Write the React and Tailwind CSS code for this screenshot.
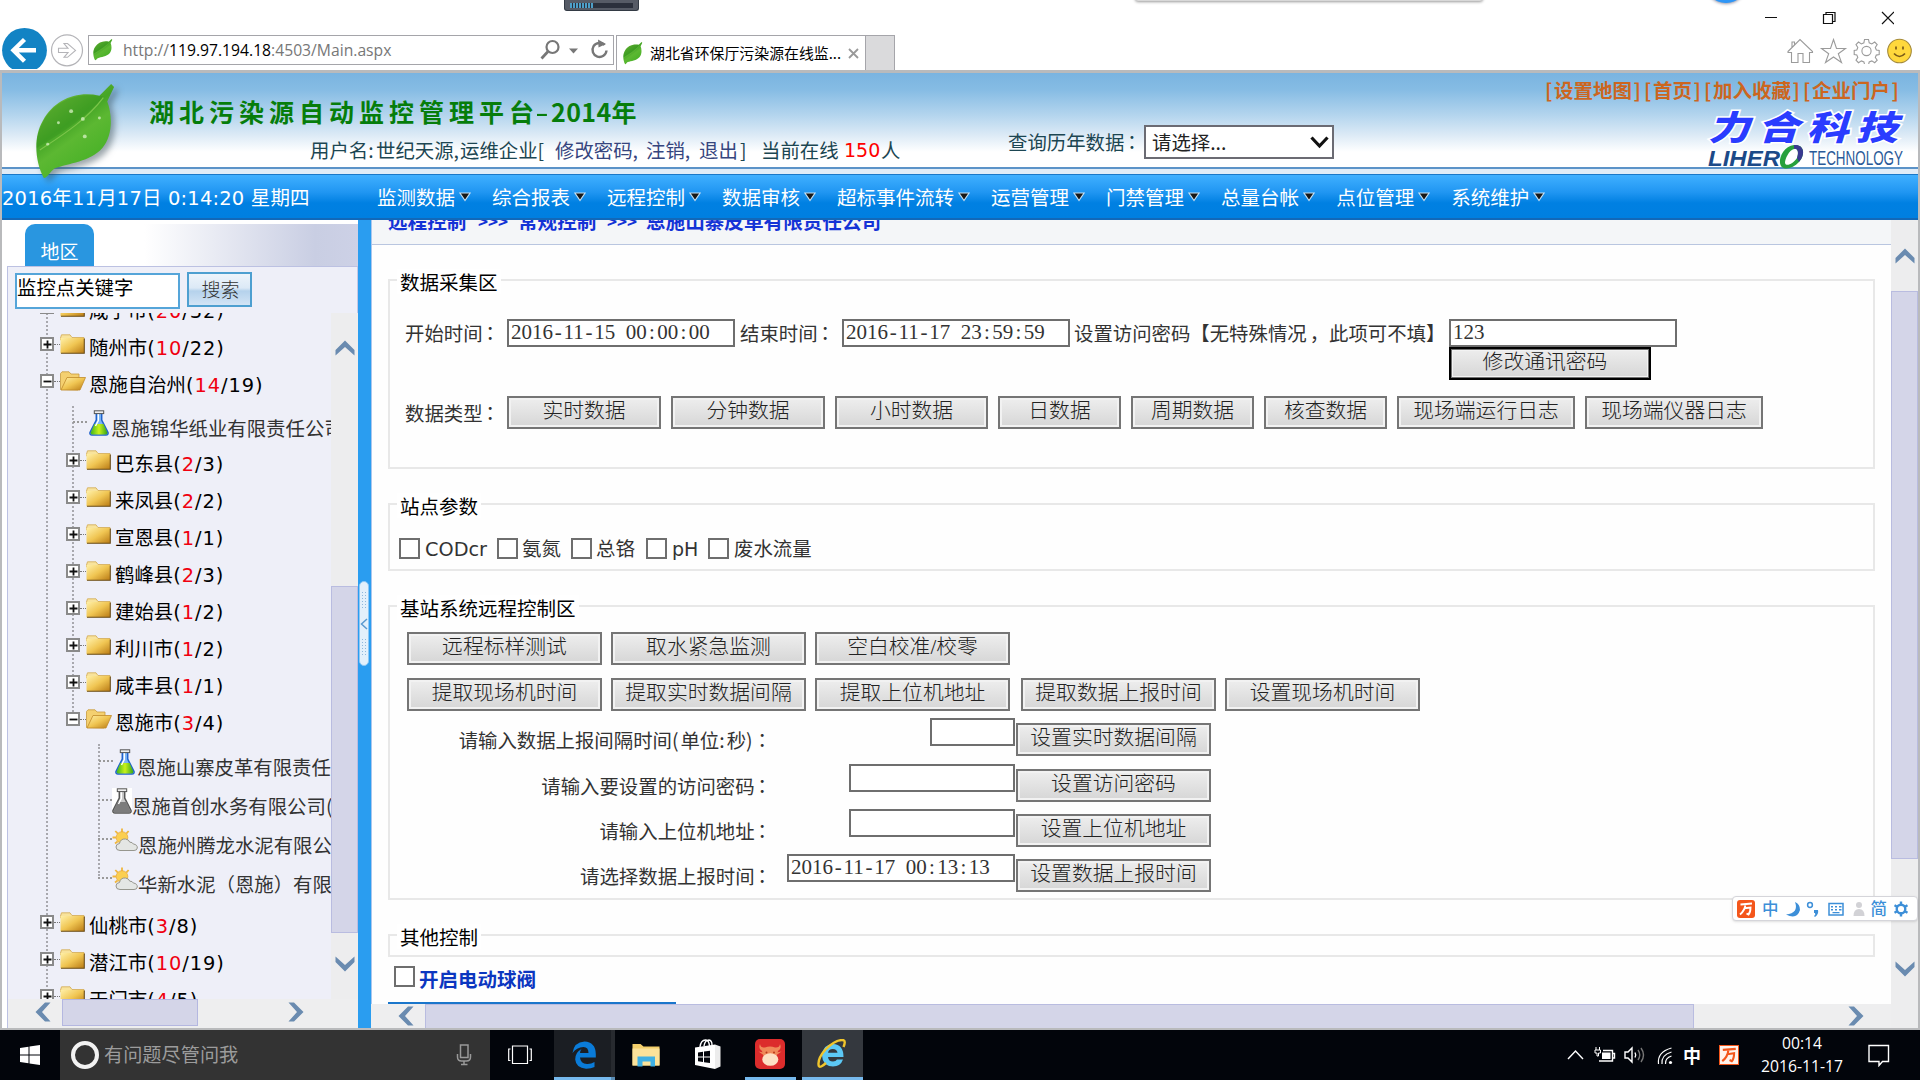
import React from "react";

const SANS = "font-['DejaVu_Sans','Noto_Sans_CJK_SC',sans-serif]";
const CJK = "font-['Noto_Sans_CJK_SC',sans-serif]";
const SERIF = "font-['Liberation_Serif','Noto_Sans_CJK_SC',serif]";

function Leaf({ className, drops = false }) {
  return (
    <svg viewBox="0 0 84 100" className={className} preserveAspectRatio="none">
      <defs>
        <linearGradient id="leafFill" x1="0.2" y1="0" x2="0.8" y2="1">
          <stop offset="0" stopColor="#7cc13e" />
          <stop offset="0.4" stopColor="#45a526" />
          <stop offset="0.55" stopColor="#5cb832" />
          <stop offset="1" stopColor="#3fae22" />
        </linearGradient>
      </defs>
      <path d="M9 97 C0 80 -2 55 8 38 C20 16 42 7 66 12 L78 0 L81 3 L74 18 C80 34 79 54 69 66 C57 80 34 82 20 87 C16 90 13 96 9 97Z" fill="url(#leafFill)" />
      <path d="M2 66 C20 55 52 36 70 13 C52 9 26 12 11 34 C4 46 1 56 2 66Z" fill="#2f8a1c" opacity="0.3" />
      <path d="M5 68 C26 54 52 38 70 14" stroke="#7cc54a" strokeWidth="1.2" fill="none" />
      {drops && (
        <g fill="#d8f3c4" opacity="0.75">
          <circle cx="37" cy="28" r="2" /><circle cx="49" cy="36" r="2" /><circle cx="66" cy="35" r="1.5" />
          <circle cx="51" cy="54" r="2" /><circle cx="24" cy="40" r="1.5" /><circle cx="13" cy="62" r="1.5" />
        </g>
      )}
    </svg>
  );
}

function Chevron({ dir }) {
  const rot = { up: "rotate-0", right: "rotate-90", down: "rotate-180", left: "-rotate-90" }[dir];
  return (
    <svg viewBox="0 0 20 16" className={`h-4 w-5 shrink-0 ${rot}`}>
      <path d="M0.5 10 L10 0.5 L19.5 10 V15.5 L10 7 L0.5 15.5Z" fill="#6a8bb0" />
    </svg>
  );
}

function Btn({ children, className = "", focus = false }) {
  const edge = focus
    ? "border-2 border-black shadow-[inset_0_0_0_1px_#707070,inset_0_0_0_2px_#f3f3f3]"
    : "border-2 border-[#757575] shadow-[inset_0_0_0_2px_#f2f2f2]";
  return (
    <button className={`flex h-[33px] shrink-0 items-center justify-center whitespace-nowrap bg-linear-to-b from-[#eeeeee] to-[#d6d6d6] pb-[3px] text-[20.8px] font-light leading-none text-[#222] ${SERIF} ${edge} ${className}`}>
      {children}
    </button>
  );
}

function Half({ text }) {
  return text.split("").map((c, i) =>
    /[-: ]/.test(c) ? (
      <span key={i} className="inline-block w-[10.5px] whitespace-pre text-center">{c}</span>
    ) : c
  );
}

function Field({ value = "", className = "" }) {
  return (
    <div className={`flex h-7 shrink-0 items-center overflow-hidden border-2 border-[#6e6e6e] bg-white pb-px pl-[2px] text-[21px] leading-none text-[#333] ${SERIF} ${className}`}>
      <span className="whitespace-nowrap"><Half text={value} /></span>
    </div>
  );
}

function Colon() {
  return <span className="font-['Noto_Sans_CJK_TC',sans-serif] -ml-[2px] mr-[2px]">：</span>;
}

function Group({ title, className, children }) {
  return (
    <section className={`relative ml-[16px] w-[1487px] shrink-0 border-2 border-[#e8e8e8] ${className}`}>
      <h2 className={`absolute -top-[12px] left-[7px] bg-white px-[3px] text-[19.5px] leading-[25px] whitespace-nowrap text-black ${CJK}`}>{title}</h2>
      {children}
    </section>
  );
}

function Check({ className = "" }) {
  return <span className={`block h-[21px] w-[21px] shrink-0 border-2 border-[#6e6e6e] bg-white ${className}`} />;
}

function Folder({ open }) {
  return (
    <svg viewBox="0 0 26 20" className="h-5 w-[26px] shrink-0">
      <defs>
        <linearGradient id="fold" x1="0" y1="0" x2="1" y2="1">
          <stop offset="0" stopColor="#fff0a8" /><stop offset="0.5" stopColor="#f0c552" /><stop offset="1" stopColor="#b97a14" />
        </linearGradient>
      </defs>
      {open ? (
        <>
          <path d="M0.5 18.5 V2.5 L2 0.8 H9 L11 3 H19 V7 L18 19Z" fill="#f4d070" stroke="#c89a3c" strokeWidth="0.8" />
          <path d="M1 19 L7 6.5 H25.5 L20 19Z" fill="url(#fold)" stroke="#c08a2a" strokeWidth="0.8" />
        </>
      ) : (
        <>
          <path d="M0.5 4 L1.5 0.8 H10 L12 3.5 H24 V6 H0.5Z" fill="#f8e39c" stroke="#d2a850" strokeWidth="0.8" />
          <rect x="0.5" y="4" width="23.5" height="15.3" fill="url(#fold)" />
          <path d="M1 19.3 H24.3 V4.5" fill="none" stroke="#6a4c18" strokeWidth="1.1" />
        </>
      )}
    </svg>
  );
}

function Flask({ gray }) {
  return (
    <svg viewBox="0 0 20 26" className="h-[26px] w-5 shrink-0">
      <defs>
        <linearGradient id="flG" x1="0" y1="0" x2="1" y2="0">
          <stop offset="0" stopColor="#3fb51c" /><stop offset="0.5" stopColor="#c8f21a" /><stop offset="1" stopColor="#35a51a" />
        </linearGradient>
      </defs>
      <path d="M7.3 3 V10 L1 22.5 Q0.5 25 3 25 H17 Q19.5 25 19 22.5 L12.7 10 V3Z" fill={gray ? "#c8c8c8" : "#7db6f4"} stroke={gray ? "#555" : "#1f62cc"} strokeWidth="1.5" />
      <path d="M5.5 14 H14.5 L18.3 22.5 Q18.5 24.4 17 24.4 H3 Q1.5 24.4 1.7 22.5Z" fill={gray ? "#7c7c7c" : "url(#flG)"} />
      <path d="M9.3 4 V10.5 L6.5 16" stroke="#fff" strokeWidth="1.4" fill="none" />
      <rect x="5.3" y="0.8" width="9.4" height="2.8" fill="#eee" stroke="#555" strokeWidth="1" />
    </svg>
  );
}

function Weather() {
  return (
    <svg viewBox="0 0 26 24" className="h-6 w-[26px] shrink-0">
      <g stroke="#efb63c" strokeWidth="1.8">
        <path d="M10 0.5V4M3.3 3L5.8 5.6M0.5 9.5H4M3 15.5L5.6 13.6M16.6 3L14.3 5.6" />
      </g>
      <circle cx="10" cy="9.5" r="5.8" fill="#fbcf50" stroke="#e8a93a" strokeWidth="0.8" />
      <path d="M8 22.5 Q4 22.5 4 19 Q4 15.8 7.5 15.5 Q8.5 10.5 13.5 11 Q16.8 11.4 17.8 14.2 Q20.5 14 21.3 16 Q25.5 16.6 25.3 20 Q25 22.5 22 22.5Z" fill="#e4e6e4" stroke="#96968e" strokeWidth="1" />
    </svg>
  );
}

function Expander({ open, className }) {
  return (
    <span className={`flex h-[14px] w-[14px] shrink-0 items-center justify-center border-2 border-[#8a8a8a] bg-white ${className}`}>
      <svg viewBox="0 0 9 9" className="h-[9px] w-[9px] shrink-0"><path d={open ? "M0.5 4.5H8.5" : "M0.5 4.5H8.5M4.5 0.5V8.5"} stroke="#111" strokeWidth="1.8" /></svg>
    </span>
  );
}

function TreeNode({ name, on, all, open, nested }) {
  return (
    <div className="flex h-[37px] shrink-0 items-center">
      <Expander open={open} className={`mb-[9px] ${nested ? "ml-[58px]" : "ml-[32px]"}`} />
      <span className="mb-[9px] w-[6px] border-t border-dotted border-[#777]" />
      <span className="mb-[9px] flex"><Folder open={open} /></span>
      <span className={`ml-[3px] whitespace-nowrap text-[19.4px] leading-none text-black ${SANS}`}>
        {name}<span className="tracking-[0.95px]">(<span className="text-[#f00010]">{on}</span>/{all})</span>
      </span>
    </div>
  );
}

function TreeLeaf({ icon, name, className = "", indent }) {
  return (
    <div className={`flex h-[39px] shrink-0 items-center ${className}`}>
      <span className={`mb-[16px] w-[14px] shrink-0 border-t-2 border-dotted border-[#999] ${indent}`} />
      {icon}
      <span className={`mb-[4px] whitespace-nowrap text-[19.4px] leading-none text-[#333] ${CJK}`}>{name}</span>
    </div>
  );
}

const counties = [["巴东县", 2, 3], ["来凤县", 2, 2], ["宣恩县", 1, 1], ["鹤峰县", 2, 3], ["建始县", 1, 2], ["利川市", 1, 2], ["咸丰县", 1, 1]];
const menus = ["监测数据", "综合报表", "远程控制", "数据审核", "超标事件流转", "运营管理", "门禁管理", "总量台帐", "点位管理", "系统维护"];

function BrowserBar() {
  return (
    <div className="relative flex h-[70px] shrink-0 items-start overflow-hidden bg-white">
      <div className="absolute left-[564px] top-0 flex h-[11px] w-[75px] items-center rounded-b-[3px] border border-t-0 border-[#333a44] bg-[#565b66] px-[5px]">
        <div className="flex h-[5px] w-full bg-[#2b303c]"><div className="h-[5px] w-6 bg-[repeating-linear-gradient(90deg,#4d9fc8_0_2px,#2b303c_2px_3px)]" /></div>
      </div>
      <div className="absolute -top-[6px] left-[1135px] h-[7px] w-[348px] rounded bg-[#d8d8d8] shadow-[0_1px_3px_#999]" />
      <div className="absolute -top-[36px] left-[1706px] h-[39px] w-[40px] rounded-full bg-[#2f96f6] shadow-[0_1px_3px_#99a]" />

      <svg viewBox="0 0 88 43" className="mt-[26px] h-[43px] w-[88px] shrink-0">
        <circle cx="24.5" cy="24.3" r="22.4" fill="#1283c4" />
        <path d="M36 24.3H14M24.5 13.5L13.5 24.3L24.5 35.2" stroke="#fff" strokeWidth="4.4" fill="none" />
        <circle cx="67" cy="24.3" r="15.5" fill="#fff" stroke="#b4b4b8" strokeWidth="1.2" />
        <path d="M58.5 22.3H68L64 17.5H67.5L75.5 24.4L67.5 31.3H64L68 26.5H58.5Z" fill="none" stroke="#b4b4b8" strokeWidth="1.1" />
      </svg>
      <div className="mt-[35px] flex h-[30px] w-[526px] shrink-0 items-center border border-[#a5a5aa]">
        <Leaf className="ml-[4px] h-[22px] w-5" />
        <span className="ml-[10px] mt-[2px] w-[417px] whitespace-nowrap font-['Open_Sans',sans-serif] text-[15.700px] leading-none text-[#777]">
          http://<span className="text-black">119.97.194.18</span>:4503/Main.aspx
        </span>
        <svg viewBox="0 0 72 24" className="h-6 w-[72px] shrink-0" fill="none" stroke="#777">
          <circle cx="12.500" cy="9" r="6" strokeWidth="2.2" /><path d="M8 13.5L1.500 20.500" strokeWidth="2.8" />
          <path d="M29 10.5h9l-4.500 5z" fill="#777" stroke="none" />
          <path d="M64.500 7 A7 7 0 1 0 66.500 12.500" strokeWidth="2.400" /><path d="M58 1.500L66 6L58.500 9.500Z" fill="#777" stroke="none" />
        </svg>
      </div>
      <div className="ml-[2px] mt-[35px] flex h-[35px] w-[250px] shrink-0 items-center border border-b-0 border-[#a5a5aa]">
        <Leaf className="ml-[6px] h-[23px] w-5" />
        <span className={`ml-[7px] w-[195px] whitespace-nowrap text-[14.9px] leading-none text-black ${CJK}`}>湖北省环保厅污染源在线监...</span>
        <svg viewBox="0 0 11 11" className="ml-[3px] h-[11px] w-[11px] shrink-0"><path d="M1 1L10 10M10 1L1 10" stroke="#999" strokeWidth="1.800" /></svg>
      </div>
      <div className="mt-[35px] h-[35px] w-[29px] shrink-0 border border-b-0 border-l-0 border-[#a5a5aa] bg-[#dadadc]" />
      <div className="ml-auto flex h-[70px] flex-col items-end">
        <svg viewBox="0 0 130 14" className="mr-[26px] mt-[11px] h-[14px] w-[130px]" fill="none" stroke="#111" strokeWidth="1.200">
          <path d="M1 6.500H13M118 1L130 13M130 1L118 13" /><path d="M59.500 3.500h9v9h-9zM62 3.500v-2h9v9h-2" />
        </svg>
        <svg viewBox="0 0 126 26" className="mr-[7px] mt-[13px] h-[26px] w-[126px]" fill="none" stroke="#9b9b9b" strokeWidth="1.100">
          <path d="M1 13.500L13 1.500L25.500 13.500V14.500H22.500V24.500H16V15.500H11V24.500H4.500V14.500H1ZM5 9V4H7.500V6.500" />
          <path d="M46.500 1.500L49.500 10.500H58.500L51.300 15.800L54.500 24.500L46.500 19L38.500 24.500L41.700 15.800L34.500 10.500H43.500Z" />
          <path d="M77.500 1.500h4l0.700 3.300 2.600 1.100 2.900-1.900 2.500 2.500-1.900 3 1.100 2.500 2.800 0.500v4l-2.900 0.600-1 2.400 1.900 2.600-2.500 2.600-2.900-1.800-2.600 1-0.600 2.700h-4l-0.700-2.700-2.500-1-2.900 1.800-2.500-2.600 1.800-2.700-1-2.400-2.600-0.500v-4l2.600-0.500 1-2.500-1.800-3 2.500-2.500 2.900 1.900 2.500-1.100z" />
          <circle cx="79.500" cy="13" r="4.600" />
          <circle cx="112.500" cy="13" r="11.800" fill="#ffd83c" stroke="#a48a3a" />
          <path d="M109 8.500v3M116 8.500v3M107 15.500Q112.500 21.500 118 15.500" stroke="#7a5a18" strokeWidth="1.700" />
        </svg>
      </div>
    </div>
  );
}

function Banner() {
  return (
    <header className="relative flex h-[94px] shrink-0 bg-[linear-gradient(180deg,#7ab4e0_0%,#86bce4_18%,#b4d5ee_45%,#dceaf6_66%,#ffffff_84%)]">
      <div className="absolute left-[33px] top-[11px] z-10 drop-shadow-[4px_4px_3px_rgba(60,80,90,0.5)]"><Leaf drops className="h-[97px] w-[82px]" /></div>
      <div className="flex w-[1006px] shrink-0 flex-col">
        <h1 className={`ml-[147px] mt-[24px] whitespace-nowrap text-[25px] font-bold leading-[28px] text-[#067d0b] ${CJK}`}>
          <span className="tracking-[5px]">湖北污染源自动监控管理平台</span><span className="-ml-[6px] inline-block w-[18px] scale-x-150 text-center font-medium">-</span><span className="tracking-[0.400px]">2014年</span>
        </h1>
        <div className={`ml-[308px] mt-[12px] flex whitespace-nowrap text-[19.400px] leading-[26px] text-[#1c4652] ${CJK}`}>
          <span className="w-[66px]">用户名:</span><span className="w-[84px]">世纪天源,</span><span className="w-[95px]">运维企业[</span>
          <span className="w-[91px] text-[#36457e]">修改密码,</span><span className="w-[53px] text-[#36457e]">注销,</span><span className="w-[41px] text-[#36457e]">退出</span><span className="w-[21px]">]</span>
          <span className="w-[83px]">当前在线</span><span className="w-[37px] font-['DejaVu_Sans'] text-[19px] text-[#f00]">150</span><span>人</span>
        </div>
      </div>
      <div className={`mt-[51px] flex h-[36px] w-[330px] shrink-0 items-center text-[19.400px] text-[#1c4652] ${CJK}`}>
        <span className="w-[136px] whitespace-nowrap leading-none">查询历年数据<Colon /></span>
        <div className="flex h-[34px] w-[190px] items-center justify-between border-2 border-[#6b6b73] bg-white pl-[6px] pr-[3px] text-[#222]">
          <span className="leading-none">请选择...</span>
          <svg viewBox="0 0 19 13" className="h-[13px] w-[19px]"><path d="M1.500 1.500L9.500 10L17.500 1.500" fill="none" stroke="#111" strokeWidth="3.200" /></svg>
        </div>
      </div>
      <div className="ml-auto flex w-[375px] shrink-0 flex-col items-end pr-[13px]">
        <div className={`-mt-[1px] mb-[5px] flex w-[360px] whitespace-nowrap pt-[4px] text-[19.500px] font-bold leading-[27px] text-[#cc661f] ${CJK}`}>
          {[["设置地图", "w-[99px]"], ["首页", "w-[60px]"], ["加入收藏", "w-[99px]"], ["企业门户", "w-[99px]"]].map(([t, w]) => (
            <span key={t} className={`flex shrink-0 justify-between pr-[3px] ${w}`}><span>[</span><span>{t}</span><span>]</span></span>
          ))}
        </div>
        <svg viewBox="0 0 200 62" className="h-[62px] w-[200px] overflow-visible">
          <g className={CJK} fontWeight="900" fontSize="34" fontStyle="italic" fill="#2a3cff" stroke="#fff" strokeWidth="3" paintOrder="stroke">
            <text x="3" y="32" textLength="197" lengthAdjust="spacingAndGlyphs" className="tracking-[6px]">力合科技</text>
          </g>
          <text x="3" y="58" textLength="72" lengthAdjust="spacingAndGlyphs" fontSize="22" fontWeight="bold" fontStyle="italic" fill="#1c4a88" className="font-['Liberation_Sans']">LIHER</text>
          <path d="M89 37 C99 36 101 46 94 54 C87 62 76 63 75 55 C74 48 80 38 89 37Z M89 41 C84 42 80 51 80 55 C81 59 88 56 92 50 C94 45 93 40 89 41Z" fill="#27a03c" fillRule="evenodd" />
          <path d="M89 37 C99 36 101 46 94 54 L92 50 C94 45 93 40 89 41Z" fill="#3a3a90" />
          <text x="104" y="57" textLength="94" lengthAdjust="spacingAndGlyphs" fontSize="21" fill="#2a5a98" className="font-['Liberation_Sans']">TECHNOLOGY</text>
        </svg>
      </div>
    </header>
  );
}

function Sidebar() {
  return (
    <aside className="flex h-[808px] w-[356px] shrink-0 flex-col bg-white">
      <div className="mt-[4px] flex h-[42px] shrink-0 bg-[linear-gradient(90deg,#fff_0%,#fff_40%,#c9cee3_88%,#cdd1e6_100%)] pl-[23px]">
        <div className={`flex w-[69px] items-center justify-center rounded-t-[10px] bg-[#2996e0] pt-[10px] text-[19px] leading-none text-white ${CJK}`}>地区</div>
      </div>
      <div className="ml-[5px] flex min-h-0 flex-1 flex-col border-l border-t border-[#bcc1e2] bg-[#eeeff8]">
        <div className="flex h-[46px] shrink-0 items-start border-r border-[#c4c8e4] pl-[7px] pt-[5px]">
          <div className={`mt-[1px] h-[36px] w-[165px] border-2 border-[#55a5d9] bg-white pt-[1px] text-[19.400px] leading-[22px] text-black ${CJK}`}>监控点关键字</div>
          <div className={`ml-[7px] flex h-[35px] w-[65px] items-center justify-center border-2 border-[#4d9fd0] bg-[linear-gradient(180deg,#edf4fb_0%,#dce9f6_45%,#b5d2ec_55%,#d2e4f5_100%)] pb-[2px] pl-[2px] text-[19px] font-light leading-none text-[#333] ${CJK}`}>搜索</div>
        </div>
        <div className="flex h-[686px] shrink-0">
          <div className="relative flex w-[323px] shrink-0 flex-col overflow-hidden">
            <span className="absolute left-[38px] top-0 h-[686px] border-l-2 border-dotted border-[#a8a8ae]" />
            <span className="absolute left-[64px] top-[93px] h-[310px] border-l-2 border-dotted border-[#a8a8ae]" />
            <span className="absolute left-[90px] top-[431px] h-[132px] border-l-2 border-dotted border-[#a8a8ae]" />
            <div className="relative -mt-[20px] flex flex-col">
              <TreeNode name="咸宁市" on="20" all="32" />
              <TreeNode name="随州市" on="10" all="22" />
              <TreeNode name="恩施自治州" on="14" all="19" open />
              <TreeLeaf indent="ml-[65px]" className="-mb-[3px] mt-[6px]" icon={<span className="mb-[14px] ml-[2px] mr-[2px] flex"><Flask /></span>} name="恩施锦华纸业有限责任公司" />
              {counties.map(([n, a, b]) => <TreeNode key={n} nested name={n} on={a} all={b} />)}
              <TreeNode nested open name="恩施市" on="3" all="4" />
              <TreeLeaf indent="ml-[91px]" className="mt-[7px]" icon={<span className="mb-[14px] ml-[2px] mr-[2px] flex"><Flask /></span>} name="恩施山寨皮革有限责任公司" />
              <TreeLeaf indent="ml-[90px]" icon={<span className="mb-[14px] flex bg-white"><Flask gray /></span>} name="恩施首创水务有限公司(" />
              <TreeLeaf indent="ml-[90px]" icon={<span className="mb-[14px] flex"><Weather /></span>} name="恩施州腾龙水泥有限公司" />
              <TreeLeaf indent="ml-[90px]" icon={<span className="mb-[14px] flex"><Weather /></span>} name="华新水泥（恩施）有限公司" />
              <div className="h-[3px]" />
              <TreeNode name="仙桃市" on="3" all="8" />
              <TreeNode name="潜江市" on="10" all="19" />
              <TreeNode name="天门市" on="4" all="5" />
            </div>
          </div>
          <div className="flex flex-1 flex-col items-center bg-[#ededee]">
            <div className="flex h-[273px] shrink-0 items-start pt-[27px]"><Chevron dir="up" /></div>
            <div className="h-[347px] w-full shrink-0 border border-[#b9bce0] bg-[#d4d5e8]" />
            <div className="flex pt-[23px]"><Chevron dir="down" /></div>
          </div>
        </div>
        <div className="flex flex-1 items-start bg-[#eeeeef]">
          <span className="ml-[25px] mt-[5px]"><Chevron dir="left" /></span>
          <span className="ml-[9px] h-[27px] w-[136px] border border-[#b4b7e0] bg-[#d4d5e8]" />
          <span className="ml-[88px] mt-[5px]"><Chevron dir="right" /></span>
        </div>
      </div>
    </aside>
  );
}

const controlRows = [
  { label: <>请输入数据上报间隔时间<span className="tracking-[2px]">(</span>单位<span className="tracking-[2px]">:</span>秒<span className="tracking-[2px]">)</span></>, value: "", w: "w-[85px]", h: "h-[46px]", action: "设置实时数据间隔" },
  { label: "请输入要设置的访问密码", value: "", w: "w-[166px]", h: "h-[45px]", action: "设置访问密码" },
  { label: "请输入上位机地址", value: "", w: "w-[166px]", h: "h-[45px]", action: "设置上位机地址" },
  { label: "请选择数据上报时间", value: "2016-11-17 00:13:13", w: "w-[228px]", h: "h-[45px]", action: "设置数据上报时间" },
];

function Content() {
  const label = `shrink-0 whitespace-nowrap text-[19.400px] leading-none text-[#333] ${CJK}`;
  return (
    <main className="flex h-[784px] w-[1520px] shrink-0 flex-col overflow-hidden border-l border-[#a9c6ee] bg-[#fefefe]">
      <div className="h-[25px] shrink-0 overflow-hidden border-b border-[#b9c6e0] bg-[#f4f6f8]">
        <div className={`-mt-[12px] ml-[16px] flex whitespace-nowrap text-[19.600px] font-bold leading-[26px] text-[#1433d6] ${CJK}`}>
          <span className="w-[90px]">远程控制</span><span className="w-[40px] text-[17px]">&gt;&gt;&gt;</span>
          <span className="w-[89px]">常规控制</span><span className="w-[39px] text-[17px]">&gt;&gt;&gt;</span><span>恩施山寨皮革有限责任公司</span>
        </div>
      </div>
      <Group title="数据采集区" className="mt-[34px] h-[190px]">
        <div className="flex pl-[15px] pt-[38px]">
          <span className={`mt-[4px] w-[102px] ${label}`}>开始时间<Colon /></span>
          <Field className="w-[228px]" value="2016-11-15 00:00:00" />
          <span className={`ml-[5px] mt-[4px] w-[102px] ${label}`}>结束时间<Colon /></span>
          <Field className="w-[228px]" value="2016-11-17 23:59:59" />
          <span className={`ml-[4px] mt-[4px] w-[375px] ${label}`}>设置访问密码【无特殊情况<span className="ml-[3px]">，</span>此项可不填】</span>
          <div className="flex flex-col">
            <Field className="w-[228px]" value="123" />
            <Btn focus className="w-[202px] pr-[10px]">修改通讯密码</Btn>
          </div>
        </div>
        <div className="mt-[16px] flex items-center pl-[15px]">
          <span className={`w-[102px] ${label}`}>数据类型<Colon /></span>
          <div className="flex gap-[10px]">
            <Btn className="w-[154px]">实时数据</Btn><Btn className="w-[154px]">分钟数据</Btn><Btn className="w-[153px]">小时数据</Btn>
            <Btn className="w-[123px]">日数据</Btn><Btn className="w-[123px]">周期数据</Btn><Btn className="w-[123px]">核查数据</Btn>
            <Btn className="w-[178px]">现场端运行日志</Btn><Btn className="w-[178px]">现场端仪器日志</Btn>
          </div>
        </div>
      </Group>
      <Group title="站点参数" className="mt-[34px] h-[68px]">
        <div className="flex items-center pl-[9px] pt-[32px]">
          <Check /><span className={`ml-[5px] mt-[3px] w-[72px] shrink-0 text-[19.300px] leading-none text-[#333] ${SANS}`}>CODcr</span>
          <Check /><span className={`ml-[4px] w-[49px] ${label}`}>氨氮</span>
          <Check /><span className={`ml-[4px] w-[50px] ${label}`}>总铬</span>
          <Check /><span className={`ml-[5px] mt-[3px] w-[36px] shrink-0 text-[19px] leading-none text-[#333] ${SANS}`}>pH</span>
          <Check /><span className={`ml-[5px] ${label}`}>废水流量</span>
        </div>
      </Group>
      <Group title="基站系统远程控制区" className="mt-[34px] h-[295px]">
        <div className="flex gap-[9px] pl-[17px] pt-[25px]">
          <Btn className="w-[195px]">远程标样测试</Btn><Btn className="w-[195px]">取水紧急监测</Btn><Btn className="w-[195px]">空白校准/校零</Btn>
        </div>
        <div className="mt-[13px] flex gap-[9px] pl-[17px]">
          <Btn className="w-[195px]">提取现场机时间</Btn><Btn className="w-[195px]">提取实时数据间隔</Btn><Btn className="mr-[2px] w-[195px]">提取上位机地址</Btn>
          <Btn className="w-[195px]">提取数据上报时间</Btn><Btn className="w-[195px]">设置现场机时间</Btn>
        </div>
        <div className="mt-[7px] flex flex-col">
          {controlRows.map((r) => (
            <div key={r.action} className={`flex items-start ${r.h}`}>
              <span className={`mt-[12px] w-[384px] text-right ${label}`}>{r.label}<Colon /></span>
              <div className="flex w-[241px] shrink-0 justify-end"><Field className={r.w} value={r.value} /></div>
              <Btn className="ml-[1px] mt-[5px] w-[195px]">{r.action}</Btn>
            </div>
          ))}
        </div>
      </Group>
      <Group title="其他控制" className="mt-[34px] h-[23px]" />
      <div className="mt-[9px] flex h-[36px] w-[288px] shrink-0 items-start border-0">
        <Check className="ml-[22px]" />
        <span className={`ml-[4px] mt-[3px] whitespace-nowrap text-[19.500px] font-bold leading-none text-[#0b36c0] ${CJK}`}>开启电动球阀</span>
      </div>
      <div className="ml-[16px] h-[3px] w-[288px] shrink-0 bg-[#1a76cb]" />
    </main>
  );
}

function WanGlyph({ className, stroke }) {
  return (
    <svg viewBox="0 0 16 16" className={className} fill="none" stroke={stroke} strokeWidth="1.900">
      <path d="M2.500 3.500L14 2.500M7.500 3.200Q7 9.500 2 13.500M6.500 7.300L12.500 6.500Q12.500 11.500 10.500 13.500L8.500 12.500" />
    </svg>
  );
}

function InputBar() {
  return (
    <div className={`absolute right-0 top-[676px] flex h-[25px] w-[186px] items-center rounded border border-[#d5d5da] bg-white pl-[4px] text-[16.500px] font-bold leading-none text-[#3d8fd8] shadow-sm ${CJK}`}>
      <span className="flex h-[18px] w-[18px] shrink-0 items-center justify-center rounded-[3px] bg-[#f4561b]"><WanGlyph className="h-4 w-4" stroke="#fff" /></span>
      <span className="ml-[7px] font-medium">中</span>
      <svg viewBox="0 0 91 20" className="ml-[1px] h-5 w-[91px] shrink-0 overflow-visible" fill="#3d8fd8">
        <path d="M15 3 Q19 14 6 15.500 Q17 21 20 11 Q20 5 15 3Z" />
        <circle cx="30" cy="6" r="2.400" fill="none" stroke="#3d8fd8" strokeWidth="1.500" /><path d="M34 11h4q1 4-3 7l-1-1q2-1 1-3h-1z" />
        <path d="M49 4.500h14v11.500H49z" fill="none" stroke="#3d8fd8" strokeWidth="1.500" /><path d="M51 7h2v1.500h-2zM55 7h2v1.500h-2zM59 7h2.500v1.500h-2.500zM51 10h2v1.500h-2zM55 10h2v1.500h-2zM59 10h2.500v1.500h-2.500zM52.500 13h7v1.300h-7z" />
        <g fill="#d2d2d6"><circle cx="79" cy="6" r="3" /><path d="M73.500 17q0-7 5.500-7t5.500 7z" /></g>
      </svg>
      <span className="font-medium">简</span>
      <svg viewBox="0 0 16 16" className="ml-[6px] h-4 w-4 shrink-0" fill="none" stroke="#3d8fd8"><circle cx="8" cy="8" r="4.300" strokeWidth="2.400" /><path d="M8 0.500v3M8 12.500v3M1.500 4.200l2.600 1.500M11.900 10.300l2.600 1.500M1.500 11.800l2.600-1.500M11.900 5.700l2.600-1.500" strokeWidth="2.400" /></svg>
    </div>
  );
}

function Taskbar() {
  return (
    <footer className="flex h-[50px] shrink-0 items-center bg-[#02050b]">
      <div className="flex h-full w-[60px] items-center justify-center">
        <svg viewBox="0 0 20 20" className="h-5 w-5" fill="#fff"><path d="M0 3L8.500 1.800V9.500H0zM9.500 1.600L20 0V9.500H9.500zM0 10.500H8.500V18.200L0 17zM9.500 10.500H20V20L9.500 18.400z" /></svg>
      </div>
      <div className="flex h-full w-[430px] items-center bg-[#333333]">
        <span className="ml-[11px] h-7 w-7 rounded-full border-[4px] border-[#f2f2f2]" />
        <span className={`ml-[5px] w-[343px] text-[19.200px] leading-none text-[#9c9c9c] ${CJK}`}>有问题尽管问我</span>
        <svg viewBox="0 0 16 22" className="ml-[9px] h-[22px] w-4" fill="none" stroke="#999" strokeWidth="1.500"><path d="M4.500 1h7.500v12.500h-7.500zM1.500 10v3q0 4 4 4h5q4 0 4-4v-3M8 17v3.500M5 20.500h6.500" /></svg>
      </div>
      <div className="flex h-full w-[64px] items-center justify-center pr-1">
        <svg viewBox="0 0 24 20" className="h-5 w-6" fill="none" stroke="#fff" strokeWidth="1.200"><path d="M4.500 1h15v17.500h-15zM2.500 4H0.700v11.500H2.500M21.500 4h1.800v11.500h-1.800" /></svg>
      </div>
      <div className="flex h-full w-[57px] items-center justify-center border-b-[3px] border-[#76b9ed] bg-[#1b1e23] pl-[3px] pt-[3px]">
        <svg viewBox="0 0 24 28" className="h-7 w-6"><path d="M0.500 12 Q2 1 12.500 0.500 Q23.500 1 23.800 13 V16.500 H8 Q8.500 22.500 15 23 Q19 23.200 22.500 21 V26 Q19 27.800 14 27.700 Q4 27 3.200 18.500 Q3 11.500 9.500 8 Q8 10 8 12 H16.500 Q16.500 6 11.500 6 Q4.500 6.300 0.500 12Z" fill="#0a7bd8" /></svg>
      </div>
      <div className="h-full w-[4px] border-b-[3px] border-[#5a8cb4] bg-[#272a2f]" />
      <div className="flex h-full w-[62px] items-center justify-center">
        <svg viewBox="0 0 28 24" className="h-6 w-7"><path d="M0.500 1h8l3 2.500H27.500V22.500H0.500z" fill="#f3cf6b" /><path d="M0.500 5.500H27.500V22.500H0.500z" fill="#fbe29a" /><path d="M5.500 13.500h17.500v10h-4.500v-5h-8v5h-5z" fill="#3fb0e4" /></svg>
      </div>
      <div className="flex h-full w-[62px] items-center justify-center">
        <svg viewBox="0 0 28 32" className="mb-[2px] h-8 w-7"><path d="M6 9 Q7 1.500 12 2 Q15 2.500 15.500 8M10 8 Q11 2 15 2 Q18 2.500 18 7" fill="none" stroke="#fff" strokeWidth="1.400" /><path d="M1 9.500L21 6.500V31L1 27z" fill="#fff" /><path d="M21 6.500L26.500 8.500V28.500L21 31z" fill="#ececec" /><path d="M4 14.500L9 13.800V18.500H4zM10 13.600L16 12.800V18.500H10zM4 19.500H9V24L4 23.300zM10 19.500H16V25L10 24.200z" fill="#02050b" /></svg>
      </div>
      <div className="ml-[6px] flex h-full w-[51px] items-center justify-center border-b-[3px] border-[#76b9ed] pr-[1px] pt-[1px]">
        <svg viewBox="0 0 30 30" className="h-[30px] w-[30px]"><rect width="30" height="30" rx="5" fill="#dc2c2c" /><path d="M5 5 Q5.500 9 10 8.500 Q15 6.500 20 8.500 Q24.500 9 25 5 Q27 10 23 12 L21 19 H9 L7 12 Q3 10 5 5Z" fill="#f08a5a" /><path d="M3.500 12.500l5 1v2.500zM26.500 12.500l-5 1v2.500z" fill="#f08a5a" /><ellipse cx="15.300" cy="20.500" rx="8" ry="6.300" fill="#fde0c4" /><circle cx="11.500" cy="13.500" r="1" fill="#b83a1c" /><circle cx="19" cy="13.500" r="1" fill="#b83a1c" /></svg>
      </div>
      <div className="ml-[6px] flex h-full w-[61px] items-center justify-center border-b-[3px] border-[#76b9ed] bg-[#34383e] pr-[1px]">
        <svg viewBox="0 0 30 30" className="h-[30px] w-[30px]"><path d="M26.500 18 H11 Q11.500 22.500 16 22.500 Q19 22.500 20 20.500 H26 Q23.500 27.500 16 27.500 Q5.500 27 5 16.500 Q5.500 5.500 16 5 Q26.500 5.500 26.500 18ZM11 13.800 H20.500 Q20 10 15.800 10 Q11.500 10 11 13.800Z" fill="#5cc8f5" fillRule="evenodd" /><path d="M9 24 Q3 29.500 1.800 27 Q0 20 8.500 10.500 Q19 0 26.500 1.200 Q29 2 26.500 8" fill="none" stroke="#f0c52c" strokeWidth="2.400" /></svg>
      </div>
      <div className="ml-auto flex h-full items-center pr-[30px] text-white">
        <svg viewBox="0 0 136 26" className="h-[26px] w-[136px]" fill="none" stroke="#fff" strokeWidth="1.400">
          <path d="M1 17L8.500 9L16 17" />
          <path d="M36 8.500h9.500v10.500h-13.500M46 11.500h1.500v4.500h-1.500" /><path d="M35 10.500h8.500v6.500h-8.500z" fill="#fff" stroke="none" /><path d="M29 5v3M32.500 5v3M28 8h5.500v3h-2v3h-1.500v-3h-2z" strokeWidth="1" />
          <path d="M58 10h3l4-4v14l-4-4h-3zM68 10.500q1.500 2.500 0 5" /><path d="M71 8q3.500 5 0 10M74 6q5 7 0 14" stroke="#777" />
          <path d="M91.500 22Q90 10 104.500 6M95 22Q94 13 104.500 10M98.500 22Q98 16 104.500 14" strokeWidth="1.200" /><circle cx="103.500" cy="20.500" r="1.600" fill="#fff" stroke="none" />
        </svg>
        <span className={`-ml-[20px] text-[18px] font-bold leading-none ${CJK}`}>中</span>
        <span className="ml-[18px] flex h-5 w-5 items-center justify-center border border-[#f4561b] bg-[#fff3ec]"><WanGlyph className="h-[18px] w-[18px]" stroke="#f4561b" /></span>
        <div className="ml-[16px] flex w-[94px] flex-col items-center whitespace-nowrap font-['Open_Sans',sans-serif] text-[15.700px] leading-[23px]"><span>00:14</span><span>2016-11-17</span></div>
        <svg viewBox="0 0 22 24" className="ml-[19px] h-6 w-[22px]" fill="none" stroke="#fff" strokeWidth="1.400"><path d="M1 2.500h19.500v16H14.500L11 22.500V18.500H1z" /></svg>
      </div>
    </footer>
  );
}

export default function App() {
  return (
    <div className="flex h-[1080px] w-[1920px] flex-col overflow-hidden bg-white">
      <BrowserBar />
      <div className="flex h-[960px] shrink-0 flex-col border-x-2 border-t-[3px] border-b-2 border-[#b9babc]">
        <Banner />
        <div className="h-[2px] shrink-0 bg-[#5b93c8]" />
        <div className="h-[5px] shrink-0 bg-[#e0ecf7]" />
        <nav className={`flex h-[46px] shrink-0 items-center border-b-2 border-t border-b-[#1268b8] border-t-[#1a78c8] bg-[linear-gradient(180deg,#40b0ff_0%,#2096f2_40%,#0080e2_65%,#007fe0_100%)] pt-[4px] text-[19.500px] leading-none text-white ${SANS}`}>
          <span className="w-[375px] shrink-0 whitespace-nowrap tracking-[0.170px]">2016年11月17日 0:14:20 星期四</span>
          {menus.map((m) => (
            <span key={m} className="mr-[21px] flex shrink-0 items-center whitespace-nowrap">
              {m}
              <svg viewBox="0 0 12 10" className="mb-[3px] ml-[4px] h-[10px] w-3"><path d="M0.900 1H11.100L6 8.500Z" fill="#181818" stroke="#c4dff2" strokeWidth="1.200" /></svg>
            </span>
          ))}
        </nav>
        <div className="relative flex h-[808px] shrink-0">
          <Sidebar />
          <div className="flex w-[13px] shrink-0 flex-col items-center bg-[#2a9df0] pt-[361px]">
            <div className="flex h-[85px] w-[10px] -translate-x-px flex-col items-center justify-between rounded-full border border-[#8cc8f5] bg-[#e3f0fb] py-[9px]">
              <span className="h-[18px] w-[6px] bg-[radial-gradient(#8fb8dc_1px,transparent_1px)] bg-[size:3px_3px]" />
              <svg viewBox="0 0 8 12" className="h-3 w-2"><path d="M7 1L1.500 6L7 11" fill="none" stroke="#5a9ad0" strokeWidth="1.500" /></svg>
              <span className="h-[18px] w-[6px] bg-[radial-gradient(#8fb8dc_1px,transparent_1px)] bg-[size:3px_3px]" />
            </div>
          </div>
          <div className="flex flex-col">
            <Content />
            <div className="flex h-6 shrink-0 bg-[#eeeeef]">
              <span className="flex w-[54px] items-center justify-center pl-[16px]"><Chevron dir="left" /></span>
              <span className="w-[1269px] border border-b-0 border-[#b9bce0] bg-[#d4d5e8]" />
              <span className="ml-[152px] flex items-center"><Chevron dir="right" /></span>
            </div>
          </div>
          <div className="flex flex-1 flex-col items-center bg-[#ededee]">
            <div className="h-[71px] shrink-0 pt-[28px]"><Chevron dir="up" /></div>
            <div className="h-[568px] w-full shrink-0 border border-[#b9bce0] bg-[#d4d5e8]" />
            <div className="mt-[102px]"><Chevron dir="down" /></div>
          </div>
          <InputBar />
        </div>
      </div>
      <Taskbar />
    </div>
  );
}
